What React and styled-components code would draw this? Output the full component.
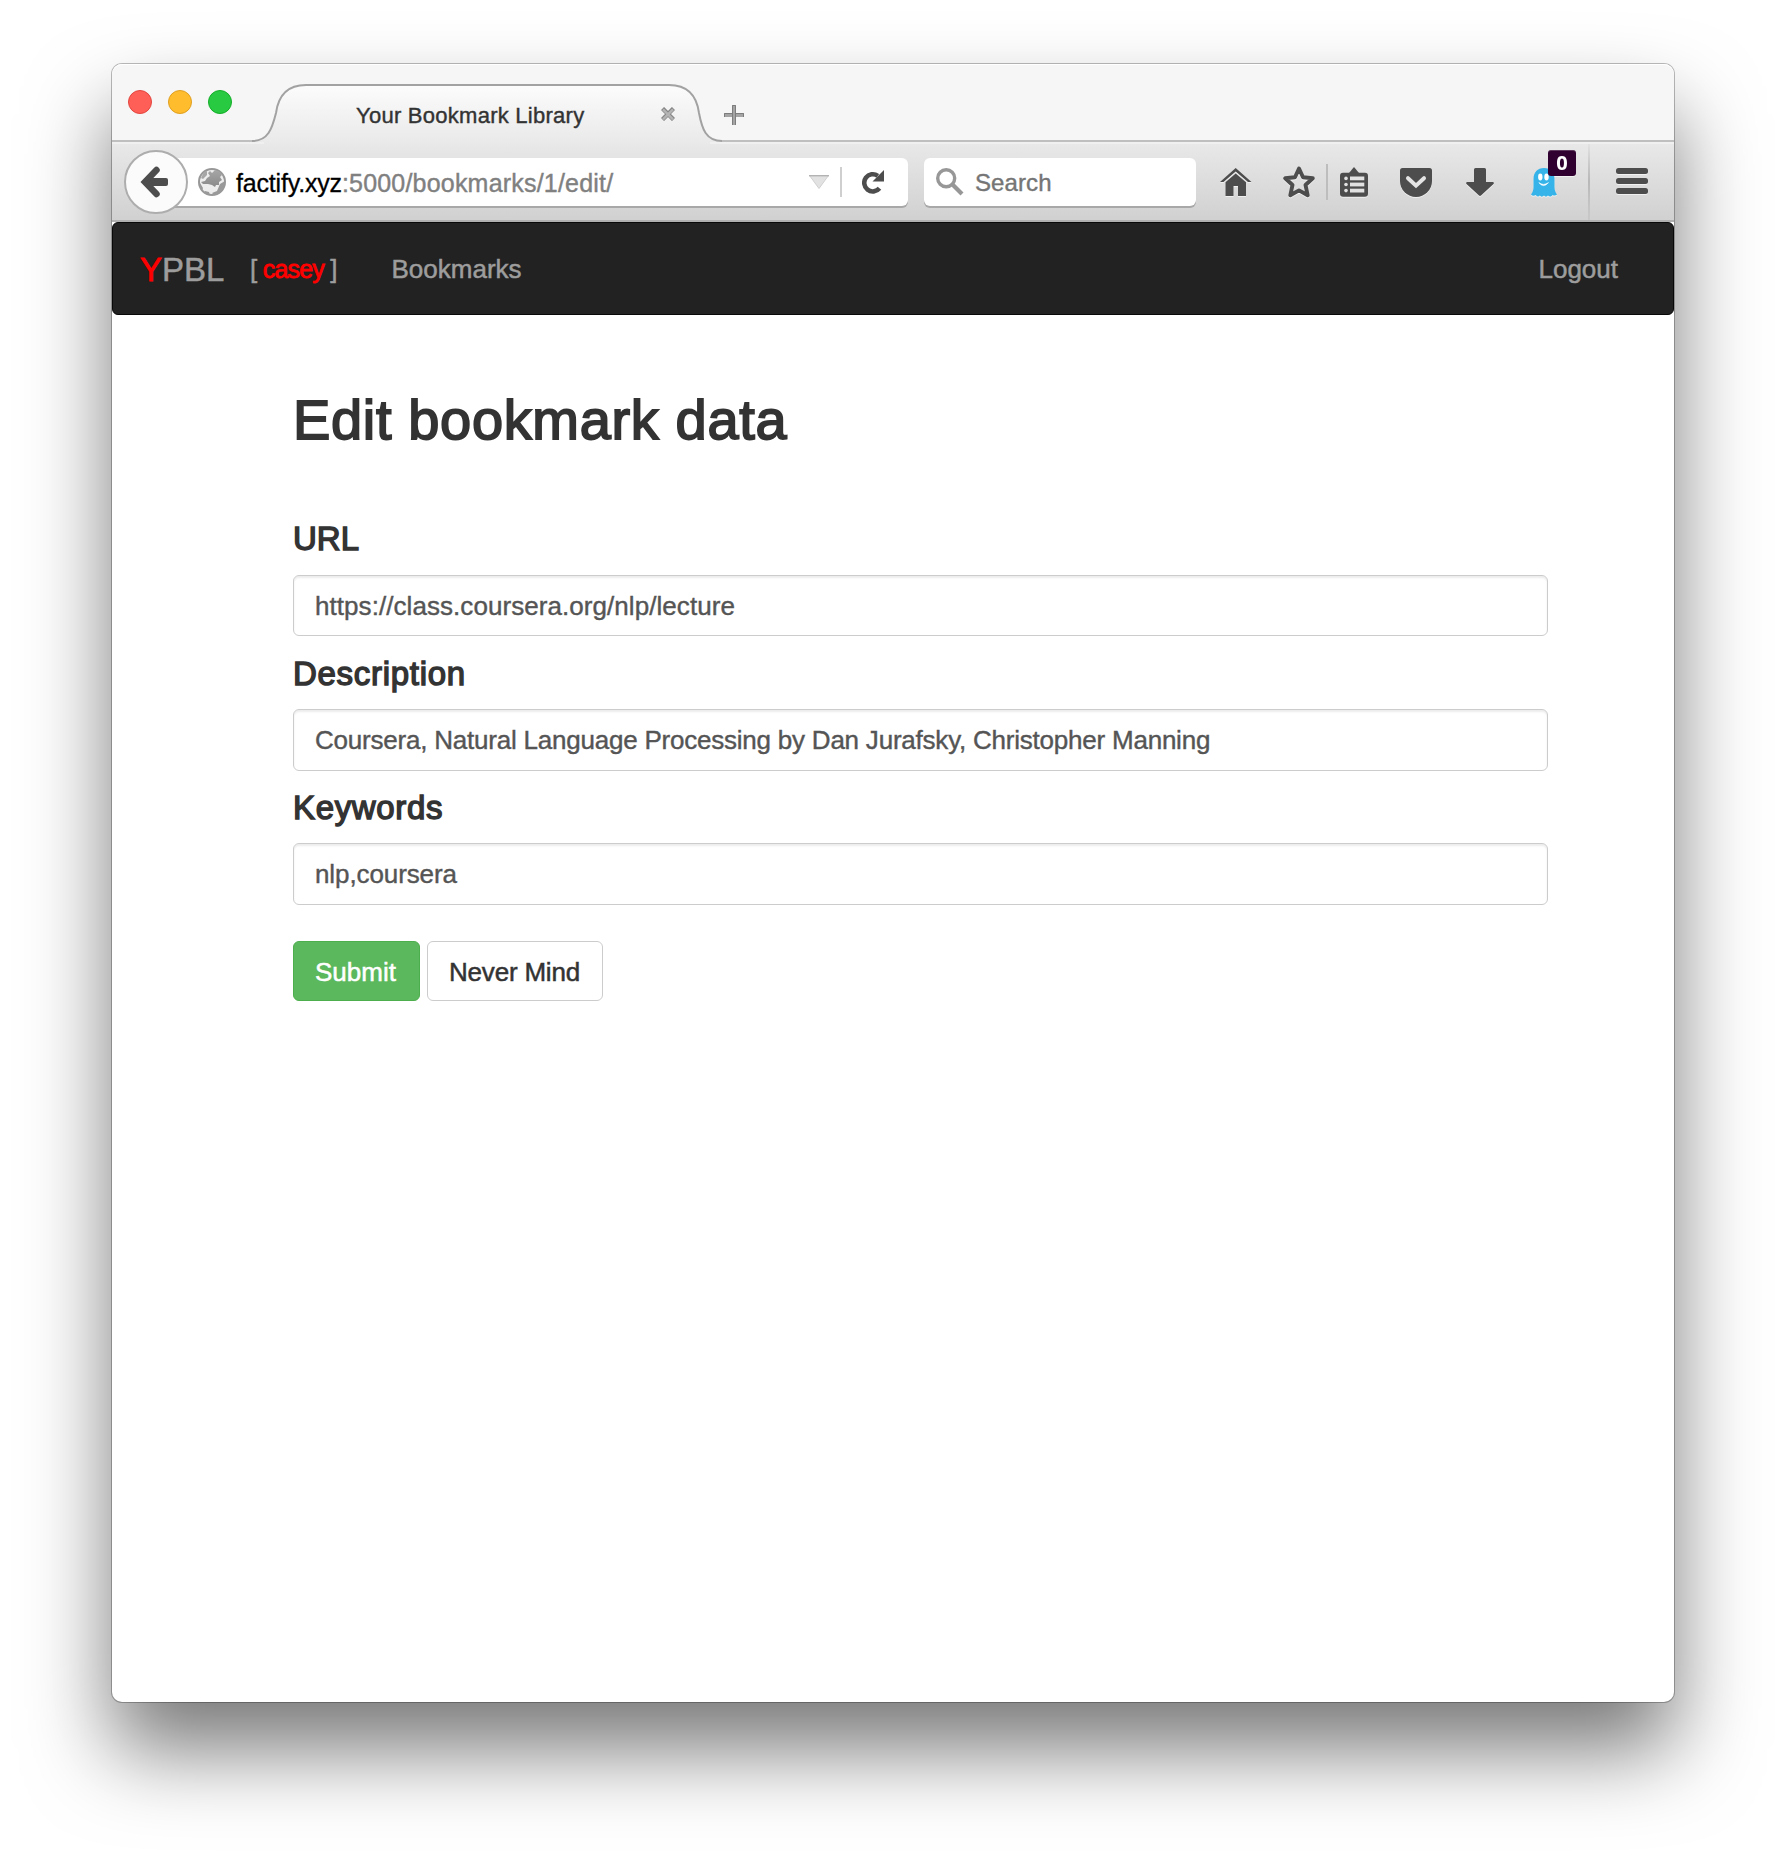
import React from "react";
import styled, { createGlobalStyle } from "styled-components";

const GlobalStyle = createGlobalStyle`
  *, *::before, *::after { box-sizing: border-box; }
  html, body { margin: 0; padding: 0; background: #fff; }
  body {
    font-family: "Liberation Sans", Arial, sans-serif;
    color: #333;
    overflow: hidden;
  }
  svg { display: block; flex: none; }
`;

const Desktop = styled.div`
  width: 1786px;
  height: 1862px;
  padding: 64px 112px 160px;
  background: #fff;
`;

const Window = styled.div`
  display: flex;
  flex-direction: column;
  height: 1638px;
  border-radius: 10px;
  background: #fff;
  box-shadow: 0 0 0 1px rgba(0, 0, 0, 0.26), 0 48px 84px rgba(0, 0, 0, 0.53);
`;

const TabStrip = styled.div`
  display: flex;
  height: 78px;
  padding-left: 16px;
  background: #f6f6f6;
  border-bottom: 2px solid #bfbfbf;
  border-radius: 10px 10px 0 0;
  box-shadow: inset 0 1px 0 #fff;
`;

const Lights = styled.div`
  display: flex;
  gap: 16px;
  width: 124px;
  padding-top: 26px;
`;

const Light = styled.span`
  width: 24px;
  height: 24px;
  border-radius: 50%;
  background: ${(p) => p.$fill};
  border: 1px solid ${(p) => p.$edge};
`;

const Tab = styled.div`
  position: relative;
  z-index: 1;
  display: flex;
  align-items: center;
  width: 470px;
  height: 60px;
  margin-top: 20px;
  padding: 0 47px 0 104px;
`;

const TabShape = styled.svg`
  position: absolute;
  left: 0;
  top: 0;
`;

const TabTitle = styled.span`
  position: relative;
  flex: 1;
  margin-top: 3px;
  font-size: 22px;
  line-height: 28px;
  letter-spacing: 0.26px;
  white-space: nowrap;
  color: #333;
  -webkit-text-stroke: 0.4px #333;
`;

const CloseMark = styled.svg`
  position: relative;
`;

const NewTab = styled.svg`
  margin: 41px 0 0 2px;
`;

const Toolbar = styled.div`
  display: flex;
  align-items: center;
  height: 80px;
  padding-left: 12px;
  background: linear-gradient(#e9e9e9, #d0d0d0);
  box-shadow: inset 0 2px 0 #f0f0f0, inset 0 -2px 0 #b0b0b0;
`;

const BackButton = styled.div`
  position: relative;
  display: flex;
  align-items: center;
  width: 64px;
  height: 64px;
  padding-left: 14px;
  border: 2px solid #adadad;
  border-radius: 50%;
  background: #fbfbfb;
`;

const Field = styled.div`
  display: flex;
  align-items: center;
  height: 48px;
  background: #fff;
  border-radius: 6px;
  box-shadow: 0 2px 0 #a8a8a8;
`;

const LocationBar = styled(Field)`
  width: 752px;
  margin-left: -32px;
  padding: 0 24px 0 42px;
`;

const Address = styled.span`
  flex: 1;
  margin: 1px 0 0 10px;
  font-size: 25px;
  line-height: 30px;
  letter-spacing: 0.2px;
  white-space: nowrap;
  color: #808080;
  -webkit-text-stroke: 0.4px #808080;
`;

const Host = styled.span`
  color: #000;
  letter-spacing: -0.18px;
  -webkit-text-stroke: 0.3px #000;
`;

const Rule = styled.span`
  flex: none;
  width: 2px;
  height: ${(p) => p.$h}px;
  margin: 0 ${(p) => p.$right}px 0 ${(p) => p.$left}px;
  background: ${(p) => p.$bg};
`;

const SearchBar = styled(Field)`
  width: 272px;
  margin-left: 16px;
  padding-left: 12px;
`;

const SearchText = styled.span`
  margin: 2px 0 0 11px;
  font-size: 24px;
  line-height: 30px;
  letter-spacing: 0.1px;
  color: #757575;
  -webkit-text-stroke: 0.4px #757575;
`;

const Tool = styled.span`
  position: relative;
  display: flex;
  margin-left: ${(p) => p.$left}px;
  margin-bottom: ${(p) => p.$lift || 0}px;
  filter: drop-shadow(0 1px 0 rgba(255, 255, 255, 0.6));
`;

const Count = styled.span`
  position: absolute;
  left: 17px;
  top: -18px;
  width: 28px;
  height: 26px;
  border-radius: 3px;
  background: #300030;
  border-top: 1px solid #5d3a5d;
  color: #fff;
  font-family: "Open Sans", "Liberation Sans", sans-serif;
  font-size: 20px;
  font-weight: 700;
  line-height: 24px;
  text-align: center;
`;

const Navbar = styled.nav`
  display: flex;
  align-items: center;
  height: 93px;
  padding: 0 55px 0 27px;
  border: 1px solid #080808;
  border-radius: 6px;
  background: #222;
  color: #9d9d9d;
  font-size: 26px;
  line-height: 32px;
  -webkit-text-stroke: 0.5px #9d9d9d;
`;

const Brand = styled.span`
  width: 110px;
  margin-top: 2px;
  font-size: 33px;
`;

const Accent = styled.span`
  color: #f00;
  -webkit-text-stroke: 0.8px #f00;
`;

const User = styled.span`
  display: flex;
  width: 141.5px;
`;

const UserName = styled.span`
  width: 73px;
  padding-left: 5.500px;
  font-size: 25px;
  color: #f00;
  letter-spacing: -0.8px;
  -webkit-text-stroke: 0.8px #f00;
`;

const NavLink = styled.span`
  margin-left: ${(p) => (p.$end ? "auto" : "0")};
`;

const Page = styled.main`
  display: flex;
  flex-direction: column;
  padding: 73px 126px 0 181px;
`;

const Heading = styled.h2`
  margin: 0 0 65px;
  font-size: 56px;
  font-weight: normal;
  line-height: 64px;
  letter-spacing: 0.65px;
  -webkit-text-stroke: 1.8px #333;
`;

const FormRow = styled.div`
  display: flex;
  flex-direction: column;
  gap: ${(p) => (p.$first ? 14 : 13)}px;
  margin-bottom: ${(p) => (p.$last ? 0 : p.$first ? 16 : 15)}px;
`;

const Label = styled.label`
  font-size: 33px;
  line-height: 44px;
  letter-spacing: ${(p) => p.$track}px;
  -webkit-text-stroke: 1.4px #333;
`;

const Input = styled.input`
  width: 100%;
  height: ${(p) => p.$h}px;
  padding: ${(p) => (p.$h % 2 ? 1 : 0)}px 21px 0;
  border: 1px solid #ccc;
  border-radius: 6px;
  outline: none;
  background: #fff;
  box-shadow: inset 0 2px 2px rgba(0, 0, 0, 0.075);
  font: 26px "Liberation Sans", Arial, sans-serif;
  letter-spacing: ${(p) => p.$track}px;
  color: #555;
  -webkit-text-stroke: 0.4px #555;
`;

const Actions = styled.div`
  display: flex;
  gap: 7px;
  margin-top: 36px;
`;

const Button = styled.button`
  width: ${(p) => p.$w}px;
  height: 60px;
  padding: 2px 0 0 21px;
  border: 1px solid ${(p) => (p.$primary ? "#4cae4c" : "#ccc")};
  border-radius: 6px;
  background: ${(p) => (p.$primary ? "#5cb85c" : "#fff")};
  color: ${(p) => (p.$primary ? "#fff" : "#333")};
  font: 26px "Liberation Sans", Arial, sans-serif;
  letter-spacing: ${(p) => p.$track || 0}px;
  text-align: left;
  white-space: nowrap;
  -webkit-text-stroke: 0.5px ${(p) => (p.$primary ? "#fff" : "#333")};
`;

const INK = "#4d4d4d";

const TAB_EDGE =
  "M0 57 C16 57 20 45 24 29 C26 14 33 1 54 1 H417 C438 1 445 14 447 29 C450 45 454 57 470 57";

function TabBackground() {
  return (
    <TabShape width="470" height="60" viewBox="0 0 470 60">
      <defs>
        <linearGradient id="tabFill" x1="0" y1="0" x2="0" y2="1">
          <stop offset="0" stopColor="#fcfcfc" />
          <stop offset="1" stopColor="#e9e9e9" />
        </linearGradient>
      </defs>
      <path d={TAB_EDGE + " V58 H458 V60 H12 V58 H0 Z"} fill="url(#tabFill)" />
      <path d={TAB_EDGE} fill="none" stroke="#a2a2a2" strokeWidth="2" />
    </TabShape>
  );
}

function BackArrow() {
  return (
    <svg width="28" height="32" viewBox="0 0 28 32">
      <path d="M16.500 4 L5 16 L16.500 28" fill="none" stroke={INK} strokeWidth="6.500" strokeLinejoin="miter" strokeLinecap="round" />
      <path d="M5 12 H26 Q28 12 28 14 V18 Q28 20 26 20 H5 Z" fill={INK} />
    </svg>
  );
}

function Globe() {
  return (
    <svg width="28" height="28" viewBox="0 0 28 28">
      <defs>
        <linearGradient id="globeFill" x1="0" y1="0" x2="0" y2="1">
          <stop offset="0" stopColor="#a6a6a6" />
          <stop offset="1" stopColor="#8a8a8a" />
        </linearGradient>
      </defs>
      <circle cx="14" cy="14" r="13" fill="#ededed" stroke="#989898" strokeWidth="2" />
      <path d="M12 3 L14 5 L17 2 L22 4 L24 7 L22 9 L24 12 L21 14 L21 17 L18 17 L17 19 L14 17 L10 16 L5 16 L3 14 L7 13 L9 10 L12 8 L10 5 Z" fill="url(#globeFill)" />
      <path d="M22 16 L27 13 L26 19 L22 24 L16 27 L14 25 L19 23 Z" fill="#999" />
      <path d="M2 15 L5 20 L4 23 L1.500 18 Z M7 23 L11 24 L12 27 L7 25 Z" fill="#999" />
      <path d="M3 10 L6 4 L9 3 L9 7 L5 11 Z" fill="#a6a6a6" />
    </svg>
  );
}

function DropMarker() {
  return (
    <svg width="20" height="14" viewBox="0 0 20 14">
      <path d="M0.500 0.500 H19.500 L10 13.500 Z" fill="#e2e2e2" stroke="#cfcfcf" />
      <path d="M0 0.700 H20" stroke="#b3b3b3" strokeWidth="1.400" />
    </svg>
  );
}

function Reload() {
  return (
    <svg width="22" height="24" viewBox="0 0 22 24">
      <path d="M17.500 18.300 A8.600 8.600 0 1 1 15.800 5.800" fill="none" stroke={INK} strokeWidth="4.600" />
      <path d="M22 0 V11.500 H10.500 Z" fill={INK} />
    </svg>
  );
}

function Magnifier() {
  return (
    <svg width="28" height="28" viewBox="0 0 28 28">
      <circle cx="10.200" cy="10.200" r="8.500" fill="none" stroke="#979797" strokeWidth="3.400" />
      <path d="M16.500 16.500 L26 26" stroke="#979797" strokeWidth="4.200" />
    </svg>
  );
}

function Home() {
  return (
    <svg width="32" height="28" viewBox="0 0 32 28">
      <path d="M0 14 L15.700 0 L31.500 14 H28 L15.700 3.600 L3.500 14 Z" fill={INK} />
      <path d="M5.500 14.300 L15.700 5.600 L26 14.300 V28 H18 V18 H13.500 V28 H5.500 Z" fill={INK} />
    </svg>
  );
}

function Star() {
  return (
    <svg width="34" height="34" viewBox="0 0 34 34">
      <path
        d="M17 3.500 L21 12.300 L30.800 13.300 L23.500 20 L25.700 30.300 L17 25.400 L8.300 30.300 L10.500 20 L3.200 13.300 L13 12.300 Z"
        fill="none" stroke={INK} strokeWidth="3.900" strokeLinejoin="round"
      />
    </svg>
  );
}

function ReadingList() {
  return (
    <svg width="28" height="30" viewBox="0 0 28 30">
      <path d="M9 6 L14 0 L19 6 Z" fill={INK} />
      <rect y="5.700" width="28" height="24" rx="3" fill={INK} />
      {[9.5, 15.6, 21.7].map((y) => (
        <g key={y} fill="#e2e2e2">
          <circle cx="6" cy={y + 1.9} r="1.800" />
          <rect x="10" y={y} width="14.300" height="3.800" />
        </g>
      ))}
    </svg>
  );
}

function Pocket() {
  return (
    <svg width="32" height="29" viewBox="0 0 32 29">
      <path d="M2.500 0 H29.500 Q32 0 32 2.500 V13 A16 16 0 0 1 0 13 V2.500 Q0 0 2.500 0 Z" fill={INK} />
      <path d="M8 10.200 L16 17.600 L24 10.200" fill="none" stroke="#e4e4e4" strokeWidth="4" strokeLinecap="round" strokeLinejoin="miter" />
    </svg>
  );
}

function Download() {
  return (
    <svg width="28" height="28" viewBox="0 0 28 28">
      <path d="M8 1.500 Q8 0 9.500 0 H18.500 Q20 0 20 1.500 V14 H27 Q28.500 14.500 27.500 16 L15 27.500 Q14 28.300 13 27.500 L0.500 16 Q-0.500 14.500 1 14 H8 Z" fill={INK} />
    </svg>
  );
}

function Ghost() {
  return (
    <svg width="26" height="29" viewBox="0 0 26 29">
      <path
        d="M13 0 C19.500 0 23.500 4.500 23.500 11 V19 C23.500 22 24.500 24.500 26 26.500 C24.500 28 23 27.800 21.500 27 C20 29 18.500 29 17 27.500 C15.500 29 14.500 29 13 27.600 C11.500 29 10 29 8.800 27.600 C7.500 29 6 28.800 4.800 27 C3 28 1.500 28 0 26.500 C1.500 24.500 2.500 22 2.500 19 V11 C2.500 4.500 6.500 0 13 0 Z"
        fill="#36b3e8"
      />
      <ellipse cx="9.300" cy="9" rx="2.200" ry="3.400" fill="#fff" />
      <ellipse cx="15.500" cy="9" rx="2.200" ry="3.400" fill="#fff" />
      <path d="M7.800 14.600 Q12.500 18.200 17.500 14.600 Q12.500 20.600 7.800 14.600 Z" fill="#fff" stroke="#fff" strokeWidth="0.600" />
    </svg>
  );
}

function Menu() {
  return (
    <svg width="32" height="26" viewBox="0 0 32 26">
      {[0, 10, 20].map((y) => (
        <rect key={y} y={y} width="32" height="6" rx="2.500" fill={INK} />
      ))}
    </svg>
  );
}

const FIELDS = [
  {
    id: "url",
    label: "URL",
    labelTrack: 0,
    value: "https://class.coursera.org/nlp/lecture",
    track: 0.06,
    height: 61,
  },
  {
    id: "description",
    label: "Description",
    labelTrack: 0.7,
    value: "Coursera, Natural Language Processing by Dan Jurafsky, Christopher Manning",
    track: -0.22,
    height: 62,
  },
  {
    id: "keywords",
    label: "Keywords",
    labelTrack: 0.65,
    value: "nlp,coursera",
    track: -0.1,
    height: 62,
  },
];

export default function App() {
  return (
    <Desktop>
      <GlobalStyle />
      <Window>
        <TabStrip>
          <Lights>
            <Light $fill="#ff5f57" $edge="#e2463f" />
            <Light $fill="#ffbd2e" $edge="#e09f1f" />
            <Light $fill="#28ca42" $edge="#14ae28" />
          </Lights>
          <Tab>
            <TabBackground />
            <TabTitle>Your Bookmark Library</TabTitle>
            <CloseMark width="14" height="14" viewBox="0 0 14 14">
              <path d="M1.500 1.500 L12.500 12.500 M12.500 1.500 L1.500 12.500" stroke="#858585" strokeWidth="4.400" />
              <path d="M2 2.300 L12 12.300 M12 2.300 L2 12.300" stroke="#b4b4b4" strokeWidth="2.400" />
            </CloseMark>
          </Tab>
          <NewTab width="20" height="20" viewBox="0 0 20 20">
            <path d="M8 0 H12 V8 H20 V12 H12 V20 H8 V12 H0 V8 H8 Z" fill="#a4a4a4" />
            <path d="M8.500 20 V0.500 H11.500 V20 M0.500 12 V8.500 H8.500 M11.500 8.500 H19.500 V12" fill="none" stroke="#7d7d7d" />
          </NewTab>
        </TabStrip>
        <Toolbar>
          <BackButton>
            <BackArrow />
          </BackButton>
          <LocationBar>
            <Globe />
            <Address>
              <Host>factify.xyz</Host>:5000/bookmarks/1/edit/
            </Address>
            <DropMarker />
            <Rule $h={30} $left={11} $right={20} $bg="#cfcfcf" />
            <Reload />
          </LocationBar>
          <SearchBar>
            <Magnifier />
            <SearchText>Search</SearchText>
          </SearchBar>
          <Tool $left={24}><Home /></Tool>
          <Tool $left={30}><Star /></Tool>
          <Rule $h={36} $left={10} $right={12} $bg="#bdbdbd" />
          <Tool $left={0} $lift={1}><ReadingList /></Tool>
          <Tool $left={32}><Pocket /></Tool>
          <Tool $left={34}><Download /></Tool>
          <Tool $left={37}>
            <Ghost />
            <Count>0</Count>
          </Tool>
          <Rule $h={76} $left={31} $right={26} $bg="linear-gradient(rgba(180,180,180,0.1), #b8b8b8 50%, rgba(180,180,180,0.3))" />
          <Tool $left={0} $lift={2}><Menu /></Tool>
        </Toolbar>
        <Navbar>
          <Brand><Accent>Y</Accent>PBL</Brand>
          <User>
            [<UserName>casey</UserName>]
          </User>
          <NavLink>Bookmarks</NavLink>
          <NavLink $end>Logout</NavLink>
        </Navbar>
        <Page>
          <Heading>Edit bookmark data</Heading>
          {FIELDS.map((f, i) => (
            <FormRow key={f.id} $first={i === 0} $last={i === FIELDS.length - 1}>
              <Label htmlFor={f.id} $track={f.labelTrack}>{f.label}</Label>
              <Input id={f.id} defaultValue={f.value} $track={f.track} $h={f.height} />
            </FormRow>
          ))}
          <Actions>
            <Button $primary $w={127}>Submit</Button>
            <Button $w={176} $track={-0.2}>Never Mind</Button>
          </Actions>
        </Page>
      </Window>
    </Desktop>
  );
}
